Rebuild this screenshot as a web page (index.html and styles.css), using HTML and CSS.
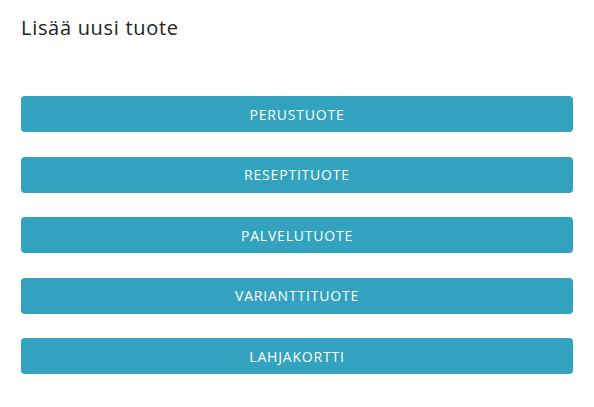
FILE: index.html
```html
<!DOCTYPE html>
<html lang="fi">
<head>
<meta charset="utf-8">
<link rel="stylesheet" href="styles.css">
</head>
<body>
<div class="page">
  <h1 class="title">Lisää uusi tuote</h1>
  <div class="buttons">
    <button class="btn">PERUSTUOTE</button>
    <button class="btn">RESEPTITUOTE</button>
    <button class="btn">PALVELUTUOTE</button>
    <button class="btn">VARIANTTITUOTE</button>
    <button class="btn">LAHJAKORTTI</button>
  </div>
</div>
</body>
</html>
```
FILE: styles.css
```css
html, body {
  margin: 0;
  padding: 0;
  background: #fff;
}
.page {
  padding: 0 21px;
  font-family: "Open Sans", "DejaVu Sans", sans-serif;
}
.title {
  margin: 0;
  padding-top: 15px;
  height: 96px;
  box-sizing: border-box;
  font-size: 20px;
  line-height: 26px;
  font-weight: 400;
  letter-spacing: 0.7px;
  color: #222;
}
.buttons {
  display: flex;
  flex-direction: column;
  gap: 24.5px;
}
.btn {
  display: block;
  width: 552px;
  height: 36px;
  border: none;
  border-radius: 4px;
  background: #33a2be;
  color: #fff;
  font-family: "Open Sans", "DejaVu Sans", sans-serif;
  font-size: 14px;
  letter-spacing: 0.8px;
  padding: 0;
  cursor: pointer;
}
```
